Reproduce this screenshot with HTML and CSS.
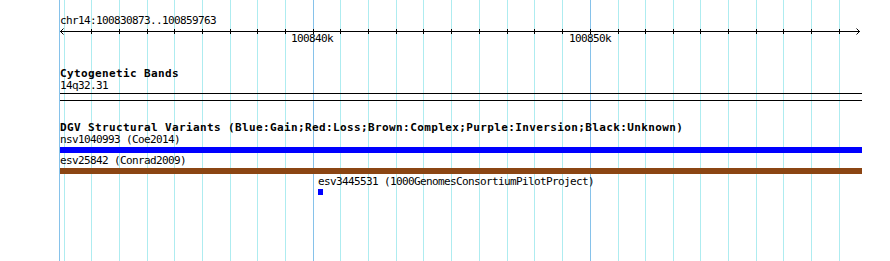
FILE: index.html
```html
<!DOCTYPE html>
<html>
<head>
<meta charset="utf-8">
<link rel="stylesheet" href="styles.css">
</head>
<body>
<div class="panel">
  <svg class="grid" width="890" height="261" viewBox="0 0 890 261" shape-rendering="crispEdges">
    <g fill="#aeecf0">
      <rect x="64" y="0" width="1" height="261"/>
      <rect x="91" y="0" width="1" height="261"/>
      <rect x="119" y="0" width="1" height="261"/>
      <rect x="147" y="0" width="1" height="261"/>
      <rect x="174" y="0" width="1" height="261"/>
      <rect x="202" y="0" width="1" height="261"/>
      <rect x="230" y="0" width="1" height="261"/>
      <rect x="257" y="0" width="1" height="261"/>
      <rect x="285" y="0" width="1" height="261"/>
      <rect x="340" y="0" width="1" height="261"/>
      <rect x="368" y="0" width="1" height="261"/>
      <rect x="396" y="0" width="1" height="261"/>
      <rect x="423" y="0" width="1" height="261"/>
      <rect x="451" y="0" width="1" height="261"/>
      <rect x="479" y="0" width="1" height="261"/>
      <rect x="507" y="0" width="1" height="261"/>
      <rect x="534" y="0" width="1" height="261"/>
      <rect x="562" y="0" width="1" height="261"/>
      <rect x="618" y="0" width="1" height="261"/>
      <rect x="645" y="0" width="1" height="261"/>
      <rect x="673" y="0" width="1" height="261"/>
      <rect x="700" y="0" width="1" height="261"/>
      <rect x="728" y="0" width="1" height="261"/>
      <rect x="756" y="0" width="1" height="261"/>
      <rect x="783" y="0" width="1" height="261"/>
      <rect x="811" y="0" width="1" height="261"/>
      <rect x="839" y="0" width="1" height="261"/>
    </g>
    <g fill="#86c2ea">
      <rect x="59" y="0" width="1" height="261"/>
      <rect x="313" y="0" width="1" height="261"/>
      <rect x="590" y="0" width="1" height="261"/>
    </g>
  </svg>

  <div class="tracks">
    <div class="pos">chr14:100830873..100859763</div>

    <div class="ruler">
      <svg width="802" height="8" viewBox="0 0 802 8" shape-rendering="crispEdges">
        <rect x="0" y="4" width="800" height="1" fill="#000"/>
        <g fill="#000">
          <rect x="31" y="2" width="1" height="5"/>
          <rect x="59" y="2" width="1" height="5"/>
          <rect x="87" y="2" width="1" height="5"/>
          <rect x="114" y="2" width="1" height="5"/>
          <rect x="142" y="2" width="1" height="5"/>
          <rect x="170" y="2" width="1" height="5"/>
          <rect x="197" y="2" width="1" height="5"/>
          <rect x="225" y="2" width="1" height="5"/>
          <rect x="253" y="2" width="1" height="5"/>
          <rect x="280" y="2" width="1" height="5"/>
          <rect x="308" y="2" width="1" height="5"/>
          <rect x="336" y="2" width="1" height="5"/>
          <rect x="363" y="2" width="1" height="5"/>
          <rect x="391" y="2" width="1" height="5"/>
          <rect x="419" y="2" width="1" height="5"/>
          <rect x="447" y="2" width="1" height="5"/>
          <rect x="474" y="2" width="1" height="5"/>
          <rect x="502" y="2" width="1" height="5"/>
          <rect x="530" y="2" width="1" height="5"/>
          <rect x="558" y="2" width="1" height="5"/>
          <rect x="585" y="2" width="1" height="5"/>
          <rect x="613" y="2" width="1" height="5"/>
          <rect x="640" y="2" width="1" height="5"/>
          <rect x="668" y="2" width="1" height="5"/>
          <rect x="696" y="2" width="1" height="5"/>
          <rect x="723" y="2" width="1" height="5"/>
          <rect x="751" y="2" width="1" height="5"/>
          <rect x="779" y="2" width="1" height="5"/>
        </g>
        <polyline points="3.5,1.5 0.5,4.5 3.5,7.5" fill="none" stroke="#000" stroke-width="1" shape-rendering="auto"/>
        <polyline points="796.5,1.5 799.5,4.5 796.5,7.5" fill="none" stroke="#000" stroke-width="1" shape-rendering="auto"/>
      </svg>
    </div>

    <div class="ticklabels">
      <span class="tick" style="left:231px">100840k</span>
      <span class="tick" style="left:509px">100850k</span>
    </div>

    <div class="track-title title-cyto">Cytogenetic Bands</div>
    <div class="label">14q32.31</div>
    <div class="band"></div>

    <div class="track-title title-dgv">DGV Structural Variants (Blue:Gain;Red:Loss;Brown:Complex;Purple:Inversion;Black:Unknown)</div>

    <div class="feature">
      <div class="label">nsv1040993 (Coe2014)</div>
      <div class="bar bar-gain" style="width:802px"></div>
    </div>
    <div class="feature">
      <div class="label">esv25842 (Conrad2009)</div>
      <div class="bar bar-complex" style="width:802px"></div>
    </div>
    <div class="feature" style="margin-left:258px">
      <div class="label">esv3445531 (1000GenomesConsortiumPilotProject)</div>
      <div class="bar bar-gain" style="width:5px"></div>
    </div>
  </div>
</div>
</body>
</html>
```

FILE: styles.css
```css
html, body {
  margin: 0;
  padding: 0;
  background: #ffffff;
}

.panel {
  position: relative;
  width: 890px;
  height: 261px;
  overflow: hidden;
  background: #ffffff;
  font-family: "DejaVu Sans Mono", "Liberation Mono", monospace;
  font-size: 11px;
  letter-spacing: -0.62px;
  color: #000;
}

.grid {
  position: absolute;
  left: 0;
  top: 0;
  display: block;
}

.tracks {
  position: relative;
  padding-left: 60px;
  width: 802px;
}

.pos {
  margin-top: 15px;
  line-height: 12px;
  height: 12px;
  white-space: nowrap;
}

.ruler {
  height: 6px;
}

.ruler svg {
  display: block;
  overflow: visible;
}

.ticklabels {
  position: relative;
  height: 12px;
  line-height: 12px;
}

.tick {
  position: absolute;
  top: 0;
  white-space: nowrap;
}

.track-title {
  font-weight: bold;
  font-size: 11px;
  letter-spacing: 0.38px;
  line-height: 12px;
  height: 12px;
  white-space: nowrap;
}

.title-cyto {
  margin-top: 23px;
}

.title-dgv {
  margin-top: 21px;
}

.label {
  line-height: 12px;
  height: 12px;
  white-space: nowrap;
}

.band {
  margin-top: 1px;
  height: 6px;
  width: 802px;
  border-top: 1px solid #000;
  border-bottom: 1px solid #000;
}

.feature {
  padding-bottom: 2px;
}

.bar {
  margin-top: 1px;
  height: 6px;
}

.bar-gain {
  background: #0000ff;
}

.bar-complex {
  background: #8b4513;
}
```
